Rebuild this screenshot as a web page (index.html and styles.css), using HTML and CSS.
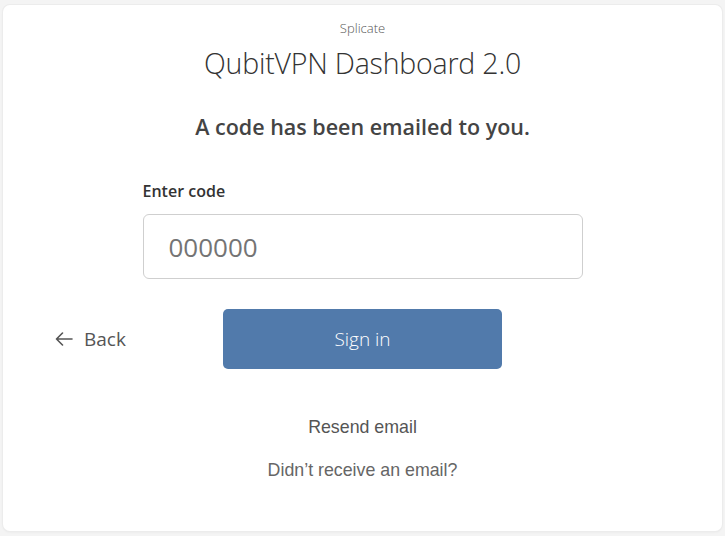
FILE: index.html
```html
<!DOCTYPE html>
<html>
<head>
<meta charset="utf-8">
<link rel="stylesheet" href="styles.css">
</head>
<body>
<main class="card">
  <div class="brand">Splicate</div>
  <h1 class="title">QubitVPN Dashboard 2.0</h1>
  <h2 class="heading">A code has been emailed to you.</h2>
  <form class="form">
    <label class="label" for="code">Enter code</label>
    <input class="input" id="code" type="text" placeholder="000000">
  </form>
  <div class="actions">
    <a class="back">
      <svg class="arrow" width="18" height="14" viewBox="0 0 18 14" fill="none" stroke="#555" stroke-width="1.6" stroke-linecap="round" stroke-linejoin="round"><path d="M17 7H1.5M7.5 1L1.5 7l6 6"/></svg>
      <span>Back</span>
    </a>
    <button class="signin" type="button">Sign in</button>
  </div>
  <a class="resend">Resend email</a>
  <a class="help">Didn’t receive an email?</a>
</main>
</body>
</html>
```
FILE: styles.css
```css
* { box-sizing: border-box; }
html, body { margin: 0; padding: 0; }
body {
  background: #f4f4f4;
  font-family: "Open Sans", "Noto Sans", sans-serif;
  padding: 5px 3px 5px 3px;
  height: 536px;
}
.card {
  background: #fff;
  border-radius: 7px;
  box-shadow: 0 0 0 1px #ececec, 0 1px 3px rgba(0,0,0,0.06);
  height: 526px;
  display: flex;
  flex-direction: column;
  align-items: center;
  padding-top: 13px;
}
.brand {
  font-size: 13px;
  font-weight: 300;
  color: #555;
  line-height: 20px;
}
.title {
  margin: 7px 0 0;
  font-size: 28.5px;
  font-weight: 300;
  color: #333;
  line-height: 36px;
  letter-spacing: -0.2px;
}
.heading {
  margin: 32px 0 0;
  font-size: 21.5px;
  font-weight: 600;
  color: #444;
  line-height: 28px;
}
.form {
  width: 440px;
  margin-top: 39px;
  display: flex;
  flex-direction: column;
}
.label {
  font-size: 16px;
  font-weight: 600;
  color: #333;
  line-height: 22px;
}
.input {
  margin-top: 12px;
  height: 65px;
  border: 1px solid #cfcfcf;
  border-radius: 6px;
  padding: 0 25px;
  font-family: "Open Sans", "Noto Sans", sans-serif;
  font-size: 26px;
  color: #333;
  outline: none;
}
.input::placeholder { color: #747474; }
.actions {
  align-self: stretch;
  display: grid;
  grid-template-columns: 1fr 279px 1fr;
  align-items: center;
  margin-top: 30px;
}
.back {
  justify-self: start;
  margin-left: 52px;
  display: flex;
  align-items: center;
  gap: 11px;
  font-size: 19px;
  color: #555;
}
.signin {
  height: 60px;
  border: none;
  border-radius: 5px;
  background: #517aab;
  color: #fff;
  font-family: "Open Sans", "Noto Sans", sans-serif;
  font-size: 19px;
  font-weight: 300;
}
.resend {
  margin-top: 48px;
  font-family: "Liberation Sans", Arial, sans-serif;
  font-size: 17.8px;
  color: #555;
  line-height: 20px;
}
.help {
  margin-top: 23px;
  font-family: "Liberation Sans", Arial, sans-serif;
  font-size: 17.8px;
  color: #666;
  line-height: 20px;
}
```
